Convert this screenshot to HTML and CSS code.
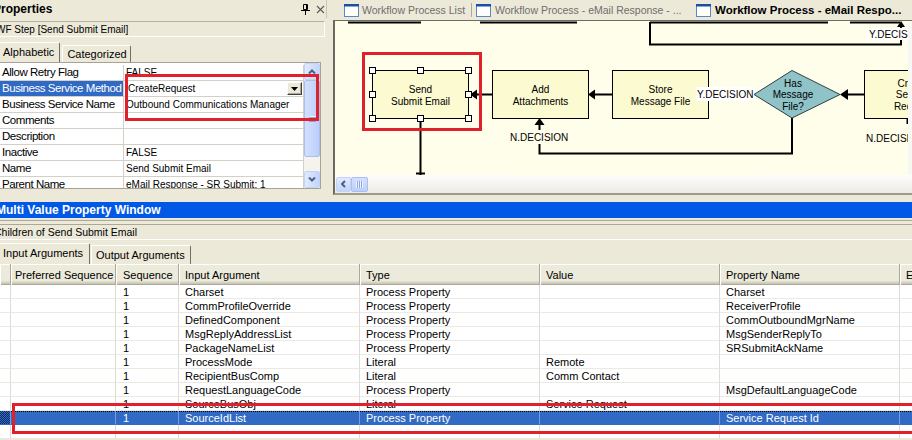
FILE: index.html
```html
<!DOCTYPE html>
<html lang="en">
<head>
<meta charset="utf-8">
<title>Workflow Process</title>
<link rel="stylesheet" href="styles.css">
</head>
<body>
<div class="app">
  <div class="top">
    <section class="props">
      <div class="ptitle">
        <span class="ptitle-text">Properties</span>
        <span class="ptitle-icons">
          <svg width="9" height="11" viewBox="0 0 9 11"><path d="M2.5 0.5h4v5h-4zM5.5 0.5v5M0 6.5h9M4.5 6.5V11" fill="none" stroke="#000"/></svg>
          <svg width="9" height="9" viewBox="0 0 9 9"><path d="M1 1l7 7M8 1L1 8" stroke="#5a5a5a" stroke-width="1.1"/></svg>
        </span>
      </div>
      <div class="pcaption"><span>WF Step [Send Submit Email]</span></div>
      <div class="ptabs">
        <div class="ptab sel">Alphabetic</div>
        <div class="ptab">Categorized</div>
      </div>
      <div class="pgrid">
        <div class="prows">
          <div class="prow"><div class="pl">Allow Retry Flag</div><div class="pv">FALSE</div></div>
          <div class="prow sel"><div class="pl">Business Service Method</div><div class="pv"><div class="combo"><span>CreateRequest</span><span class="cbtn"><svg width="7" height="4" viewBox="0 0 7 4"><path d="M0 0h7L3.5 4z" fill="#000"/></svg></span></div></div></div>
          <div class="prow"><div class="pl">Business Service Name</div><div class="pv">Outbound Communications Manager</div></div>
          <div class="prow"><div class="pl">Comments</div><div class="pv"></div></div>
          <div class="prow"><div class="pl">Description</div><div class="pv"></div></div>
          <div class="prow"><div class="pl">Inactive</div><div class="pv">FALSE</div></div>
          <div class="prow"><div class="pl">Name</div><div class="pv">Send Submit Email</div></div>
          <div class="prow"><div class="pl">Parent Name</div><div class="pv">eMail Response - SR Submit: 1</div></div>
        </div>
        <div class="vscroll">
          <div class="sbtn"><svg width="8" height="5" viewBox="0 0 8 5"><path d="M1 4.5L4 1.5l3 3" fill="none" stroke="#4d6185" stroke-width="2"/></svg></div>
          <div class="vthumb"><span class="grip-h"></span></div>
          <div class="vtrack-fill"></div>
          <div class="sbtn"><svg width="8" height="5" viewBox="0 0 8 5"><path d="M1 0.5L4 3.5l3-3" fill="none" stroke="#4d6185" stroke-width="2"/></svg></div>
        </div>
      </div>
    </section>

    <section class="editor">
      <div class="etabs">
        <div class="etab t1"><svg class="wicon" width="15" height="13" viewBox="0 0 15 13"><rect x="0.5" y="0.5" width="14" height="12" fill="#fff" stroke="#5b86cf"/><rect x="0" y="0" width="15" height="2.5" fill="#1d4ea6"/></svg><span>Workflow Process List</span></div>
        <div class="etab t2"><svg class="wicon" width="15" height="13" viewBox="0 0 15 13"><rect x="0.5" y="0.5" width="14" height="12" fill="#fff" stroke="#5b86cf"/><rect x="0" y="0" width="15" height="2.5" fill="#1d4ea6"/></svg><span>Workflow Process - eMail Response - ...</span></div>
        <div class="etab t3 active"><svg class="wicon" width="15" height="13" viewBox="0 0 15 13"><rect x="0.5" y="0.5" width="14" height="12" fill="#fff" stroke="#5b86cf"/><rect x="0" y="0" width="15" height="2.5" fill="#1d4ea6"/></svg><span>Workflow Process - eMail Respo...</span></div>
      </div>
      <div class="eframe">
        <div class="ecanvas-row">
          <div class="canvas">
            <svg class="diagram" width="573" height="154" viewBox="335 21 573 154">
              <g stroke="#000" stroke-width="2" fill="none">
                <path d="M348 22.5H421M480 22.5H577M650 22.5H828M850 22.5H900"/>
                <path d="M650 22V44.5H901V26"/>
                <path d="M492 94.5H476"/>
                <path d="M612 94.5H594"/>
                <path d="M754 94.5H708"/>
                <path d="M864 94.5H846"/>
                <path d="M792 118V153.5H539.5V124"/>
                <path d="M420.5 118V175"/>
                <path d="M416 173.5H425"/>
                <path d="M907.5 119V124"/>
              </g>
              <g fill="#000">
                <path d="M470 94.5l7-5v10z"/>
                <path d="M588 94.5l7-5v10z"/>
                <path d="M840 94.5l8-5.5v11z"/>
                <path d="M539.5 118l-5 7h10z"/>
                <path d="M901 21l-4 6h8z"/>
              </g>
              <g stroke="#000" stroke-width="1" fill="#fbfad0">
                <rect x="372.5" y="70.5" width="96" height="48"/>
                <rect x="492.5" y="70.5" width="96" height="48"/>
                <rect x="612.5" y="70.5" width="96" height="48"/>
                <rect x="864.5" y="70.5" width="96" height="48"/>
              </g>
              <polygon points="754,94.5 792,70.5 840,94.5 792,118" fill="#8fc3c8" stroke="#2d3f41" stroke-width="1"/>
              <rect x="696" y="87" width="58" height="14" fill="#fff"/>
              <rect x="509" y="130" width="62" height="14" fill="#fffeea"/>
              <rect x="867" y="28" width="45" height="12" fill="#fff"/>
              <g class="dtext" text-anchor="middle">
                <text x="420.5" y="92.5">Send</text>
                <text x="420.5" y="104.5">Submit Email</text>
                <text x="540.5" y="92.5">Add</text>
                <text x="540.5" y="104.5">Attachments</text>
                <text x="660.5" y="92.5">Store</text>
                <text x="660.5" y="104.5">Message File</text>
                <text x="793" y="86.5">Has</text>
                <text x="793" y="98">Message</text>
                <text x="793" y="110">File?</text>
                <text x="912.5" y="86.5">Create</text>
                <text x="912.5" y="98">Service</text>
                <text x="912.5" y="110">Request</text>
              </g>
              <g class="dtext">
                <text x="697" y="98">Y.DECISION</text>
                <text x="510" y="141">N.DECISION</text>
                <text x="866" y="142">N.DECISION</text>
                <text x="869" y="37.5">Y.DECISION</text>
              </g>
              <g fill="#fff" stroke="#000" stroke-width="1">
                <rect x="369.5" y="67.5" width="6" height="6"/>
                <rect x="417.5" y="67.5" width="6" height="6"/>
                <rect x="465.5" y="67.5" width="6" height="6"/>
                <rect x="369.5" y="91.5" width="6" height="6"/>
                <rect x="465.5" y="91.5" width="6" height="6"/>
                <rect x="369.5" y="115.5" width="6" height="6"/>
                <rect x="417.5" y="115.5" width="6" height="6"/>
                <rect x="465.5" y="115.5" width="6" height="6"/>
              </g>
              <rect x="363.5" y="53.5" width="117" height="76" fill="none" stroke="#e0212b" stroke-width="3"/>
            </svg>
          </div>
          <div class="evtrack"></div>
        </div>
        <div class="hscroll">
          <div class="hbtn"><svg width="5" height="8" viewBox="0 0 5 8"><path d="M4 1L1 4l3 3" fill="none" stroke="#4d6185" stroke-width="2"/></svg></div>
          <div class="hthumb"><span class="grip-v"></span></div>
        </div>
      </div>
    </section>
  </div>

  <section class="mv">
    <div class="mv-title"><span>Multi Value Property Window</span></div>
    <div class="mv-sep"></div>
    <div class="mv-caption"><span>Children of Send Submit Email</span></div>
    <div class="mv-tabs">
      <div class="mtab sel">Input Arguments</div>
      <div class="mtab">Output Arguments</div>
    </div>
    <div class="mvh">
      <div class="hc"></div>
      <div class="hc first">Preferred Sequence</div>
      <div class="hc seq">Sequence</div>
      <div class="hc">Input Argument</div>
      <div class="hc">Type</div>
      <div class="hc">Value</div>
      <div class="hc">Property Name</div>
      <div class="hc">E</div>
    </div>
    <div class="mvb">
      <div class="rc"></div><div class="rc"></div><div class="rc seq">1</div><div class="rc">Charset</div><div class="rc">Process Property</div><div class="rc"></div><div class="rc">Charset</div><div class="rc"></div>
      <div class="rc"></div><div class="rc"></div><div class="rc seq">1</div><div class="rc">CommProfileOverride</div><div class="rc">Process Property</div><div class="rc"></div><div class="rc">ReceiverProfile</div><div class="rc"></div>
      <div class="rc"></div><div class="rc"></div><div class="rc seq">1</div><div class="rc">DefinedComponent</div><div class="rc">Process Property</div><div class="rc"></div><div class="rc">CommOutboundMgrName</div><div class="rc"></div>
      <div class="rc"></div><div class="rc"></div><div class="rc seq">1</div><div class="rc">MsgReplyAddressList</div><div class="rc">Process Property</div><div class="rc"></div><div class="rc">MsgSenderReplyTo</div><div class="rc"></div>
      <div class="rc"></div><div class="rc"></div><div class="rc seq">1</div><div class="rc">PackageNameList</div><div class="rc">Process Property</div><div class="rc"></div><div class="rc">SRSubmitAckName</div><div class="rc"></div>
      <div class="rc"></div><div class="rc"></div><div class="rc seq">1</div><div class="rc">ProcessMode</div><div class="rc">Literal</div><div class="rc">Remote</div><div class="rc"></div><div class="rc"></div>
      <div class="rc"></div><div class="rc"></div><div class="rc seq">1</div><div class="rc">RecipientBusComp</div><div class="rc">Literal</div><div class="rc">Comm Contact</div><div class="rc"></div><div class="rc"></div>
      <div class="rc"></div><div class="rc"></div><div class="rc seq">1</div><div class="rc">RequestLanguageCode</div><div class="rc">Process Property</div><div class="rc"></div><div class="rc">MsgDefaultLanguageCode</div><div class="rc"></div>
      <div class="rc"></div><div class="rc"></div><div class="rc seq">1</div><div class="rc">SourceBusObj</div><div class="rc">Literal</div><div class="rc">Service Request</div><div class="rc"></div><div class="rc"></div>
      <div class="rc s sel0"></div><div class="rc s"></div><div class="rc s seq">1</div><div class="rc s">SourceIdList</div><div class="rc s">Process Property</div><div class="rc s"></div><div class="rc s">Service Request Id</div><div class="rc s"></div>
      <div class="rc"></div><div class="rc"></div><div class="rc seq"></div><div class="rc"></div><div class="rc"></div><div class="rc"></div><div class="rc"></div><div class="rc"></div>
    </div>
  </section>

  <div class="redbox rb1"></div>
  <div class="redbox rb2"></div>
</div>
</body>
</html>
```

FILE: styles.css
```css
html, body {
  margin: 0;
  padding: 0;
}
body {
  background: #ece9d8;
  font-family: "Liberation Sans", Arial, sans-serif;
  font-size: 11px;
  color: #000;
  width: 912px;
  height: 440px;
  overflow: hidden;
}
.app {
  position: relative;
  width: 912px;
  height: 440px;
  overflow: hidden;
}
.top {
  display: flex;
  height: 200px;
}

/* ---------- Properties panel ---------- */
.props {
  width: 330px;
  flex: none;
}
.ptitle {
  width: 326px;
  height: 18px;
  border-right: 1px solid #cac7b7;
  display: flex;
  align-items: center;
  justify-content: space-between;
}
.ptitle-text {
  font-weight: bold;
  font-size: 12px;
  margin-left: -7px;
  white-space: nowrap;
}
.ptitle-icons {
  display: flex;
  align-items: center;
  gap: 6px;
  margin-right: 1px;
}
.pcaption {
  margin-top: 3px;
  width: 325px;
  height: 16px;
  box-sizing: border-box;
  border-top: 1px solid #b5b2a2;
  border-bottom: 1px solid #fff;
  border-right: 1px solid #fff;
  display: flex;
  align-items: center;
  overflow: hidden;
  font-size: 10px;
}
.pcaption span {
  margin-left: -4px;
  white-space: nowrap;
}
.ptabs {
  margin-top: 5px;
  height: 20px;
  display: flex;
  align-items: flex-end;
}
.ptab {
  box-sizing: border-box;
  height: 17px;
  line-height: 16px;
  padding: 0 3px 0 4px;
  margin-left: 2px;
  border-top: 1px solid #fff;
  border-left: 1px solid #fff;
  border-right: 1px solid #716f64;
  border-radius: 2px 2px 0 0;
  white-space: nowrap;
}
.ptab.sel {
  height: 20px;
  line-height: 19px;
  padding: 0 5px 0 3px;
  margin-left: 0;
  border-left: none;
}
.pgrid {
  display: flex;
  width: 321px;
  height: 127px;
  box-sizing: border-box;
  border-top: 1px solid #a5a397;
  border-right: 1px solid #a5a397;
  border-bottom: 1px solid #a5a397;
  background: #fff;
}
.prows {
  width: 304px;
  flex: none;
  padding-top: 2px;
  overflow: hidden;
}
.prow {
  display: flex;
  height: 16px;
  box-sizing: border-box;
  border-bottom: 1px solid #d4d0c8;
}
.pl {
  width: 124px;
  flex: none;
  box-sizing: border-box;
  border-right: 1px solid #d4d0c8;
  padding-left: 2px;
  font-size: 11.5px;
  letter-spacing: -0.45px;
  line-height: 15px;
  white-space: nowrap;
  overflow: hidden;
}
.prow.sel .pl {
  background: #316ac5;
  color: #fff;
}
.pv {
  flex: 1;
  min-width: 0;
  border-right: 1px solid #d4d0c8;
  padding-left: 2px;
  font-size: 10px;
  line-height: 15px;
  white-space: nowrap;
  overflow: hidden;
}
.combo {
  display: flex;
  align-items: center;
  height: 15px;
}
.combo span:first-child {
  padding-left: 2px;
}
.cbtn {
  margin-left: auto;
  margin-right: 1px;
  width: 15px;
  height: 13px;
  box-sizing: border-box;
  background: #ece9d8;
  border-top: 1px solid #fff;
  border-left: 1px solid #fff;
  border-right: 1px solid #404040;
  border-bottom: 1px solid #404040;
  box-shadow: inset -1px -1px #aca899;
  display: flex;
  align-items: center;
  justify-content: center;
}
.vscroll {
  width: 16px;
  flex: none;
  display: flex;
  flex-direction: column;
  background: #f4f3ee;
}
.sbtn {
  height: 17px;
  box-sizing: border-box;
  border: 1px solid #c3d3f8;
  border-radius: 2px;
  background: linear-gradient(to right, #e1eafe, #c3d4fb);
  display: flex;
  align-items: center;
  justify-content: center;
}
.vthumb {
  height: 77px;
  box-sizing: border-box;
  border: 1px solid #a9bff0;
  border-radius: 2px;
  background: linear-gradient(to right, #d3e0fd, #bccffa);
  display: flex;
  align-items: center;
  justify-content: center;
}
.grip-h {
  width: 7px;
  height: 6px;
  background: repeating-linear-gradient(#eef3fe 0 1px, #8ca6dd 1px 2px);
}
.vtrack-fill {
  flex: 1;
}

/* ---------- Editor ---------- */
.editor {
  flex: 1;
  min-width: 0;
  margin-left: 3px;
  display: flex;
  flex-direction: column;
  overflow: hidden;
}
.etabs {
  height: 20px;
  display: flex;
  align-items: center;
}
.etab {
  display: flex;
  align-items: center;
  gap: 4px;
  flex: none;
  box-sizing: border-box;
  font-size: 10.5px;
  color: #6e6e6e;
  white-space: nowrap;
  height: 14px;
}
.wicon {
  flex: none;
}
.t1 {
  margin-left: 6px;
  padding-left: 5px;
  width: 133px;
  gap: 3px;
  border-right: 1px solid #aca899;
}
.t2 {
  padding-left: 4px;
  width: 218px;
}
.t3 {
  padding-left: 6px;
}
.etab.active {
  color: #000;
  font-weight: bold;
  font-size: 11.5px;
}
.eframe {
  height: 175px;
  box-sizing: border-box;
  border-top: 1px solid #6f6d62;
  border-left: 2px solid #6b6a62;
  border-bottom: 2px solid #9d9b8f;
  display: flex;
  flex-direction: column;
}
.ecanvas-row {
  flex: 1;
  min-height: 0;
  display: flex;
}
.canvas {
  width: 573px;
  flex: none;
  background: #fffeea;
  overflow: hidden;
}
.diagram {
  display: block;
}
.dtext {
  font-family: "Liberation Sans", Arial, sans-serif;
  font-size: 10px;
  fill: #000;
}
.evtrack {
  width: 17px;
  flex: none;
  background: #f7f7f3;
}
.hscroll {
  height: 18px;
  display: flex;
  align-items: center;
  padding-left: 1px;
  background: linear-gradient(#fdfdfb, #ecebe4);
}
.hbtn {
  width: 15px;
  height: 15px;
  box-sizing: border-box;
  border: 1px solid #c3d3f8;
  border-radius: 2px;
  background: linear-gradient(#e1eafe, #c3d4fb);
  display: flex;
  align-items: center;
  justify-content: center;
}
.hthumb {
  width: 17px;
  height: 15px;
  box-sizing: border-box;
  border: 1px solid #a9bff0;
  border-radius: 2px;
  background: linear-gradient(#d3e0fd, #bccffa);
  display: flex;
  align-items: center;
  justify-content: center;
}
.grip-v {
  width: 7px;
  height: 7px;
  background: repeating-linear-gradient(to right, #eef3fe 0 1px, #8ca6dd 1px 2px);
}

/* ---------- Multi value window ---------- */
.mv {
  height: 240px;
  display: flex;
  flex-direction: column;
}
.mv-title {
  margin-top: 2px;
  height: 16px;
  flex: none;
  background: #0058e6;
  color: #fff;
  font-weight: bold;
  font-size: 12px;
  display: flex;
  align-items: center;
  white-space: nowrap;
}
.mv-title span {
  margin-left: -4px;
}
.mv-sep {
  height: 6px;
  flex: none;
  background: linear-gradient(#ece9d8 0 2px, #aca899 2px 3px, #ece9d8 3px);
}
.mv-caption {
  height: 16px;
  flex: none;
  box-sizing: border-box;
  border-top: 1px solid #aca899;
  border-bottom: 1px solid #fff;
  font-size: 10.5px;
  line-height: 14px;
  white-space: nowrap;
  overflow: hidden;
}
.mv-caption span {
  margin-left: -6px;
}
.mv-tabs {
  margin-top: 3px;
  height: 21px;
  flex: none;
  display: flex;
  align-items: flex-end;
}
.mtab {
  box-sizing: border-box;
  height: 19px;
  line-height: 18px;
  padding: 0 5px 0 4px;
  margin-left: 1px;
  border-top: 1px solid #fff;
  border-left: 1px solid #fff;
  border-right: 1px solid #716f64;
  border-radius: 2px 2px 0 0;
  white-space: nowrap;
}
.mtab.sel {
  height: 21px;
  line-height: 19px;
  width: 90px;
  padding: 0 0 0 3px;
  margin-left: 0;
  border-left: none;
}
.mvh,
.mvb {
  display: grid;
  grid-template-columns: 11px 105px 63px 181px 180px 180px 180px 60px;
  width: 960px;
}
.mvh {
  height: 21px;
  flex: none;
}
.hc {
  box-sizing: border-box;
  border-right: 1px solid #aca899;
  box-shadow: inset 1px 0 #fff;
  padding-left: 6px;
  line-height: 22px;
  white-space: nowrap;
  overflow: hidden;
  background: linear-gradient(#fff 0 1px, #ebeadb 1px 17px, #e2decd 17px 18px, #d6d2c2 18px 19px, #cbc7b8 19px 20px, #aca899 20px);
}
.hc.first {
  padding-left: 4px;
}
.hc.seq,
.rc.seq {
  padding-left: 7px;
}
.mvb {
  grid-auto-rows: 14px;
  background: #fff;
}
.rc {
  box-sizing: border-box;
  border-right: 1px solid #dedcd3;
  border-bottom: 1px solid #ebe9e2;
  padding-left: 6px;
  line-height: 15px;
  white-space: nowrap;
  overflow: hidden;
}
.rc.s {
  background: #316ac5 linear-gradient(to right, #000 50%, transparent 50%) top left / 2px 1px repeat-x;
  color: #fff;
  border-right-color: #7b9bd8;
  border-bottom-color: #316ac5;
}
.rc.sel0 {
  background: repeating-conic-gradient(#316ac5 0 25%, #0b2a66 0 50%) 0 0 / 2px 2px;
}

/* ---------- annotation overlays ---------- */
.redbox {
  position: absolute;
  box-sizing: border-box;
  border: 3px solid #e0212b;
}
.rb1 {
  left: 125px;
  top: 74px;
  width: 194px;
  height: 47px;
}
.rb2 {
  left: 12px;
  top: 403px;
  width: 910px;
  height: 31px;
}
```
